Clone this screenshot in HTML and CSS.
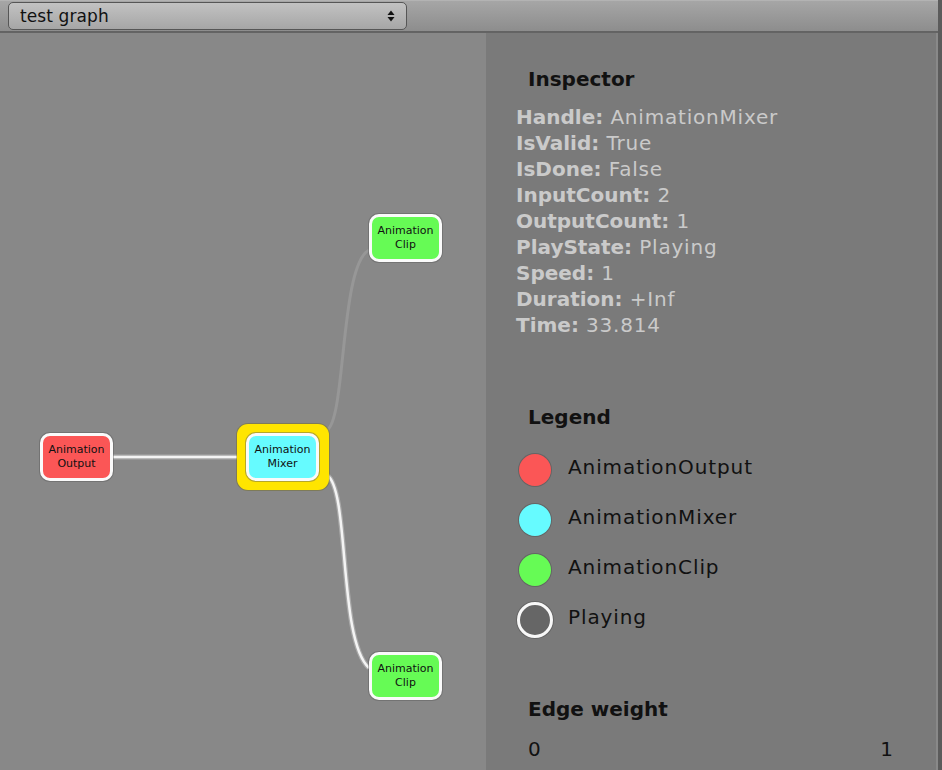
FILE: index.html
```html
<!DOCTYPE html>
<html>
<head>
<meta charset="utf-8">
<link rel="stylesheet" href="styles.css">
</head>
<body>
<div class="app">
  <div class="toolbar">
    <div class="dropdown">
      <span class="dropdown-label">test graph</span>
      <svg class="dropdown-arrows" width="8" height="12" viewBox="0 0 8 12">
        <path d="M4 0.5 L7.5 5 L0.5 5 Z" fill="#111"/>
        <path d="M4 11.5 L7.5 7 L0.5 7 Z" fill="#111"/>
      </svg>
    </div>
  </div>
  <div class="content">
    <div class="graph">
      <svg class="edges" width="486" height="737" viewBox="0 0 486 737">
        <path class="edge-halo" d="M112 424 L238 424"/>
        <path class="edge-core" d="M112 424 L238 424"/>
        <path class="edge-faint" d="M327 397 C346 386 340 232 369 217"/>
        <path class="edge-halo" d="M327 442 C350 457 338 607 369 635"/>
        <path class="edge-core" d="M327 442 C350 457 338 607 369 635"/>
      </svg>
      <div class="node node-output" style="left:40px;top:400px">Animation<br>Output</div>
      <div class="selected" style="left:237px;top:391px">
        <div class="node node-mixer">Animation<br>Mixer</div>
      </div>
      <div class="node node-clip" style="left:369px;top:181px">Animation<br>Clip</div>
      <div class="node node-clip" style="left:369px;top:619px">Animation<br>Clip</div>
    </div>
    <div class="panel">
      <div class="heading">Inspector</div>
      <div class="props">
        <div class="prop"><b>Handle:</b> AnimationMixer</div>
        <div class="prop"><b>IsValid:</b> True</div>
        <div class="prop"><b>IsDone:</b> False</div>
        <div class="prop"><b>InputCount:</b> 2</div>
        <div class="prop"><b>OutputCount:</b> 1</div>
        <div class="prop"><b>PlayState:</b> Playing</div>
        <div class="prop"><b>Speed:</b> 1</div>
        <div class="prop"><b>Duration:</b> +Inf</div>
        <div class="prop"><b>Time:</b> 33.814</div>
      </div>
      <div class="heading legend-heading">Legend</div>
      <div class="legend">
        <div class="legend-row"><span class="swatch"><span class="dot dot-output"></span></span><span class="legend-text">AnimationOutput</span></div>
        <div class="legend-row"><span class="swatch"><span class="dot dot-mixer"></span></span><span class="legend-text">AnimationMixer</span></div>
        <div class="legend-row"><span class="swatch"><span class="dot dot-clip"></span></span><span class="legend-text">AnimationClip</span></div>
        <div class="legend-row"><span class="swatch"><span class="ring"></span></span><span class="legend-text">Playing</span></div>
      </div>
      <div class="heading edge-heading">Edge weight</div>
      <div class="scale"><span>0</span><span>1</span></div>
    </div>
  </div>
</div>
<div class="strip"></div>
</body>
</html>
```

FILE: styles.css
```css
html, body {
  margin: 0;
  padding: 0;
}
body {
  width: 942px;
  height: 770px;
  overflow: hidden;
  display: flex;
  font-family: "DejaVu Sans", "Noto Sans", sans-serif;
  background: #7a7a7a;
}
.app {
  width: 938px;
  height: 770px;
  display: flex;
  flex-direction: column;
}
.strip {
  width: 4px;
  height: 770px;
  background: #5b5b5b;
}
.toolbar {
  height: 32px;
  box-sizing: border-box;
  border-top: 1px solid #b3b3b3;
  border-bottom: 1px solid #636363;
  background: linear-gradient(#a6a6a6, #8d8d8d);
  padding: 1px 0 0 8px;
  margin-bottom: 1px;
}
.toolbar + .content {
  margin-top: -1px;
}
.dropdown {
  width: 399px;
  height: 28px;
  box-sizing: border-box;
  border: 1px solid #565656;
  border-radius: 5px;
  background: linear-gradient(#c2c2c2, #a6a6a6);
  display: flex;
  align-items: center;
  justify-content: space-between;
  padding: 0 11px 0 11px;
}
.dropdown-label {
  font-size: 17px;
  color: #111;
  letter-spacing: 0.1px;
}
.dropdown-arrows {
  display: block;
}
.content {
  flex: 1;
  display: flex;
  border-top: 1px solid #646464;
}
.graph {
  position: relative;
  width: 486px;
  height: 737px;
  background: #888888;
  flex: none;
}
.edges {
  position: absolute;
  left: 0;
  top: 0;
}
.edge-halo {
  fill: none;
  stroke: #a9a9a9;
  stroke-width: 5;
}
.edge-core {
  fill: none;
  stroke: #f4f4f4;
  stroke-width: 2.5;
}
.edge-faint {
  fill: none;
  stroke: #979797;
  stroke-width: 3;
}
.node {
  position: absolute;
  width: 73px;
  height: 48px;
  box-sizing: border-box;
  border: 3px solid #fafafa;
  border-radius: 10px;
  box-shadow: 0 0 0 1px rgba(90, 90, 90, 0.45);
  font-size: 11px;
  line-height: 14px;
  color: #111;
  text-align: center;
  display: flex;
  align-items: center;
  justify-content: center;
}
.node-output { background: #fb5656; }
.node-mixer {
  position: static;
  background: #66fbff;
}
.node-clip { background: #66fb55; }
.selected {
  position: absolute;
  width: 92px;
  height: 66px;
  box-sizing: border-box;
  padding: 9px 0 0 9px;
  background: #ffe500;
  border-radius: 11px;
  box-shadow: 0 0 0 1px rgba(110, 100, 0, 0.35);
}
.panel {
  width: 450px;
  flex: none;
  background: #7a7a7a;
  border-right: 2px solid #898989;
  box-sizing: border-box;
  width: 452px;
  padding-top: 33px;
  display: flex;
  flex-direction: column;
}
.heading {
  font-weight: bold;
  font-size: 20px;
  line-height: 26px;
  color: #111;
  padding-left: 42px;
}
.props {
  margin-top: 12px;
  padding-left: 30px;
}
.prop {
  font-size: 20px;
  line-height: 26px;
  color: #cacaca;
  letter-spacing: 0.8px;
}
.prop b {
  letter-spacing: 0;
}
.legend-heading {
  margin-top: 66px;
}
.legend {
  margin-top: 12px;
  padding-left: 30px;
}
.legend-row {
  height: 50px;
  display: flex;
  align-items: center;
}
.swatch {
  width: 38px;
  height: 38px;
  display: flex;
  align-items: center;
  justify-content: center;
  margin-right: 14px;
  margin-top: 6px;
}
.dot {
  width: 32px;
  height: 32px;
  border-radius: 50%;
  box-shadow: 0 0 0 1px rgba(80, 80, 80, 0.5);
}
.dot-output { background: #fb5656; }
.dot-mixer { background: #66fbff; }
.dot-clip { background: #66fb55; }
.ring {
  width: 36px;
  height: 36px;
  box-sizing: border-box;
  border-radius: 50%;
  border: 3px solid #f8f8f8;
  background: #666666;
  box-shadow: 0 0 0 1px rgba(80, 80, 80, 0.5);
}
.legend-text {
  font-size: 20px;
  color: #111;
  letter-spacing: 0.9px;
}
.edge-heading {
  margin-top: 54px;
}
.scale {
  margin-top: 14px;
  display: flex;
  justify-content: space-between;
  padding: 0 43px 0 42px;
  font-size: 20px;
  line-height: 26px;
  color: #111;
}
```
